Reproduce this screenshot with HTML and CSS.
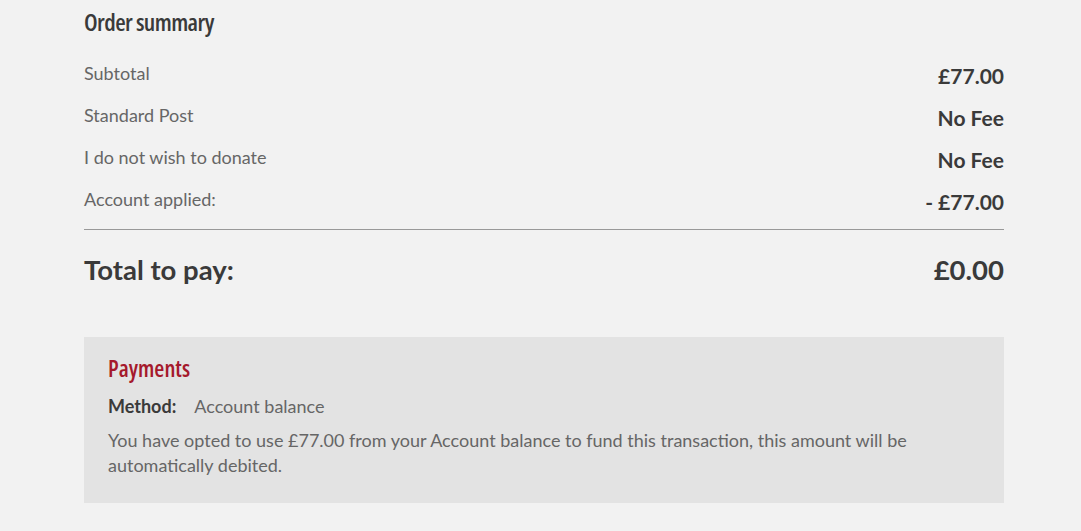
FILE: index.html
```html
<!DOCTYPE html>
<html lang="en">
<head>
    <meta charset="UTF-8">
    <meta name="viewport" content="width=device-width, initial-scale=1.0">
    <title>Order summary</title>
    <link rel="stylesheet" href="styles.css">
</head>
<body>
    <div class="page">
        <h2 class="summary-title">Order summary</h2>

        <div class="summary-row">
            <span class="label">Subtotal</span>
            <span class="value">£77.00</span>
        </div>
        <div class="summary-row">
            <span class="label">Standard Post</span>
            <span class="value">No Fee</span>
        </div>
        <div class="summary-row">
            <span class="label">I do not wish to donate</span>
            <span class="value">No Fee</span>
        </div>
        <div class="summary-row">
            <span class="label">Account applied:</span>
            <span class="value">- £77.00</span>
        </div>

        <div class="total-row">
            <span>Total to pay:</span>
            <span>£0.00</span>
        </div>

        <div class="payments">
            <h3 class="payments-title">Payments</h3>
            <div class="method">
                <span class="method-label">Method:</span>
                <span>Account balance</span>
            </div>
            <p class="note">You have opted to use £77.00 from your Account balance to fund this transaction, this amount will be automatically debited.</p>
        </div>
    </div>
</body>
</html>
```

FILE: styles.css
```css
body {
    margin: 0;
    background-color: #f2f2f2;
    font-family: 'Lato', sans-serif;
    color: #666;
}

.page {
    width: 920px;
    margin: 0 0 0 84px;
    padding-top: 7px;
}

.summary-title {
    font-family: 'Open Sans', sans-serif;
    font-stretch: 75%;
    font-weight: 600;
    font-size: 24px;
    letter-spacing: -0.6px;
    color: #3a3a3a;
    margin: 0 0 17px 0;
    line-height: 30px;
}

.summary-row {
    display: flex;
    justify-content: space-between;
    align-items: flex-end;
    height: 42px;
    font-size: 18px;
}

.summary-row .label {
    padding-bottom: 12px;
}

.summary-row .value {
    font-size: 21px;
    font-weight: bold;
    color: #3a3a3a;
    padding-bottom: 8px;
}

.total-row {
    display: flex;
    justify-content: space-between;
    border-top: 1px solid #999;
    margin-top: 7px;
    padding-top: 23px;
    font-size: 27.5px;
    font-weight: bold;
    color: #3a3a3a;
    line-height: 34px;
}

.payments {
    background-color: #e3e3e3;
    margin-top: 50px;
    padding: 16px 24px 25px 24px;
}

.payments-title {
    font-family: 'Open Sans', sans-serif;
    font-stretch: 75%;
    font-weight: 600;
    font-size: 23px;
    color: #a5192c;
    margin: 0 0 11px 0;
    line-height: 30px;
}

.method {
    font-size: 18px;
    line-height: 24px;
}

.method-label {
    font-weight: bold;
    color: #3a3a3a;
    margin-right: 14px;
}

.note {
    font-size: 18px;
    line-height: 25px;
    margin: 10px 0 0 0;
}
```
